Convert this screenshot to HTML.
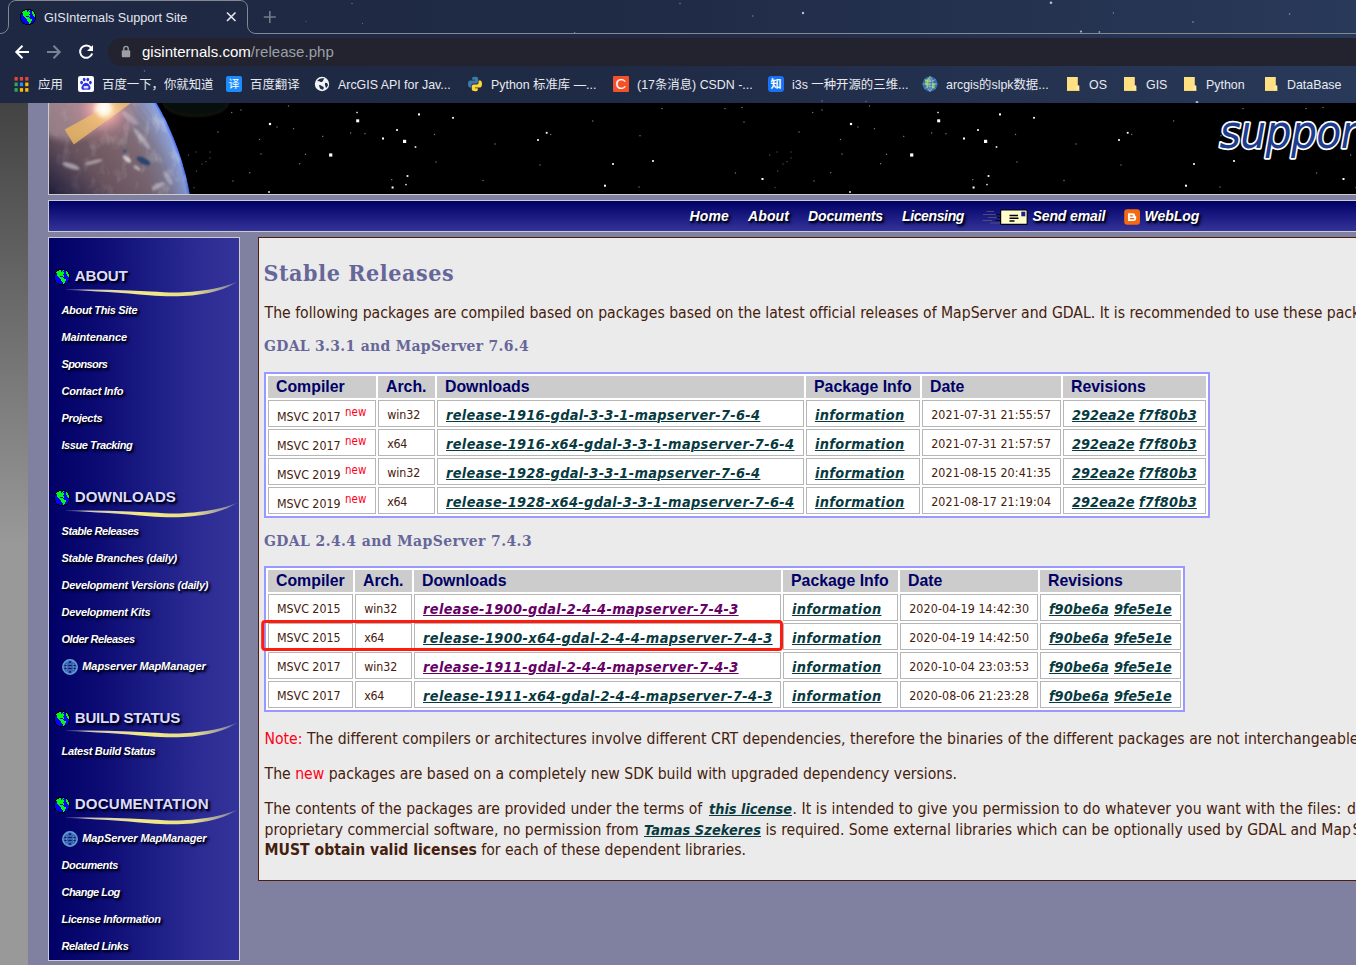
<!DOCTYPE html>
<html lang="en">
<head>
<meta charset="utf-8">
<title>GISInternals Support Site</title>
<style>
*{box-sizing:border-box;margin:0;padding:0}
html,body{width:1356px;height:965px;overflow:hidden}
body{position:relative;background:#8080a0;font-family:"DejaVu Sans Condensed","Liberation Sans",sans-serif;color:#45200c}
.abs{position:absolute}
/* ---------- browser chrome ---------- */
#chrome{position:absolute;left:0;top:0;width:1356px;height:103px;background:linear-gradient(90deg,#1e2842 0,#1f2a45 45%,#293959 100%);overflow:hidden;font-family:"Liberation Sans","Noto Sans CJK SC",sans-serif}
#tabstrip{position:absolute;left:0;top:0;width:1356px;height:35px}
#toolbar{position:absolute;left:0;top:35px;width:1356px;height:33px}
#omni{position:absolute;left:108px;top:38px;width:1300px;height:28px;border-radius:14px;background:#22232f}
#url{position:absolute;left:142px;top:42px;font-size:15px;line-height:20px;color:#fff;white-space:nowrap;letter-spacing:0.03px}
#url span{color:#9aa0a6}
#tabtitle{position:absolute;left:44px;top:9.9px;font-size:12.65px;line-height:16px;color:#e4e7ee;white-space:nowrap}
.bm{position:absolute;top:77.2px;height:17px;font-size:12.4px;line-height:17px;color:#e8eaf0;white-space:nowrap}
.bmi{position:absolute;top:76px;width:16px;height:16px}
/* ---------- page ---------- */
#strip{position:absolute;left:0;top:103px;width:28px;height:862px;background:linear-gradient(180deg,#434343 0,#999999 442px,#999999 100%)}
#banner{position:absolute;left:48px;top:96px;width:1320px;height:99px;border:1px solid #ccc;background:#000;overflow:hidden}
#nav{position:absolute;left:48px;top:200px;width:1320px;height:32px;border:1px solid #ccc;background:linear-gradient(180deg,#000066 0,#333399 100%)}
.nv{position:absolute;top:7px;font-size:14.5px;line-height:18px;font-weight:bold;font-style:italic;color:#fff;white-space:nowrap;text-shadow:2px 2px 2px #000033}
#side{position:absolute;left:48px;top:237px;width:192px;height:724px;border:1px solid #ccc;background:linear-gradient(90deg,#000067 0,#0c0c74 28%,#1f1f88 58%,#2c2c94 80%,#333399 100%)}
.sh{position:absolute;left:26px;font-family:"Liberation Sans",sans-serif;font-size:16px;line-height:20px;font-weight:bold;color:#dcdcff;white-space:nowrap;text-shadow:2px 2px 2px #000033}
.si{position:absolute;left:12px;font-size:11.5px;line-height:16px;font-weight:bold;font-style:italic;color:#fff;white-space:nowrap;text-shadow:2px 2px 2px #000033}
.gl{position:absolute;left:5px;width:16px;height:16px}
.sw{position:absolute;left:14px;width:176px;height:18px}
#content{position:absolute;left:258px;top:237px;width:1110px;height:644px;border:1px solid #4d1f0a;background:#ebebeb}

































/*GENCSS-START*/.tb{position:absolute;border:2px solid #9999ff;background:#fff}.thc{position:absolute;height:22px;background:#ccc}.tdc{position:absolute;height:27px;background:#fff;border:1px solid #b6b6b6}#sideic{position:absolute;left:49px;top:238px;width:190px;height:721px}.h1{position:absolute;white-space:pre;font-family:"DejaVu Serif Condensed","DejaVu Serif","Liberation Serif",serif;font-weight:bold;font-size:23px;line-height:30px;color:#666699}.h2{position:absolute;white-space:pre;font-family:"DejaVu Serif Condensed","DejaVu Serif","Liberation Serif",serif;font-weight:bold;font-size:15.5px;line-height:22px;color:#666699}.p{position:absolute;white-space:pre;font-family:"DejaVu Sans Condensed","Liberation Sans",sans-serif;font-size:15.62px;line-height:20px;color:#45200c}.th{position:absolute;white-space:pre;font-family:"Liberation Sans",sans-serif;font-weight:bold;font-size:15.85px;line-height:20px;color:#000066}.td{position:absolute;white-space:pre;font-family:"DejaVu Sans Condensed","Liberation Sans",sans-serif;font-size:12.35px;line-height:16px;color:#45200c}.lk{position:absolute;white-space:pre;font-family:"DejaVu Sans Condensed","Liberation Sans",sans-serif;font-weight:bold;font-style:italic;font-size:14.4px;line-height:20px;color:#083a40;text-decoration:underline;text-decoration-thickness:1.3px;text-underline-offset:1.1px}.sup{position:absolute;white-space:pre;font-family:"DejaVu Sans Condensed","Liberation Sans",sans-serif;font-size:11.4px;line-height:14px;color:#ff0018}.nv{position:absolute;white-space:pre;font-family:"Liberation Sans",sans-serif;font-weight:bold;font-style:italic;font-size:14px;line-height:18px;color:#fff;text-shadow:1.5px 1.5px 1.5px #00001c,2px 2px 3px #000030}.sh{position:absolute;white-space:pre;font-family:"Liberation Sans",sans-serif;font-weight:bold;font-size:15.1px;line-height:20px;color:#dcdcff;text-shadow:1.5px 1.5px 1.5px #00001c,2px 2px 3px #000030}.si{position:absolute;white-space:pre;font-family:"Liberation Sans",sans-serif;font-weight:bold;font-style:italic;font-size:11px;line-height:16px;color:#fff;text-shadow:1.5px 1.5px 1.5px #00001c,2px 2px 3px #000030}/*GENCSS-END*/
</style>
</head>
<body>
<div id="strip"></div>
<div id="banner"><svg class="abs" style="left:0;top:0" width="1307" height="97" viewBox="49 97 1307 97">
<defs>
<radialGradient id="eg" gradientUnits="userSpaceOnUse" cx="-80" cy="241" r="274">
<stop offset="0" stop-color="#6e5654"/><stop offset="0.75" stop-color="#8c6e6e"/><stop offset="0.86" stop-color="#87727a"/><stop offset="0.925" stop-color="#838098"/><stop offset="0.968" stop-color="#8a96c4"/><stop offset="0.988" stop-color="#8aa2e0"/><stop offset="0.996" stop-color="#5a7cea"/><stop offset="1" stop-color="#2c54e4"/>
</radialGradient>
<linearGradient id="ed" gradientUnits="userSpaceOnUse" x1="49" y1="194" x2="130" y2="110"><stop offset="0" stop-color="#181838" stop-opacity="0.95"/><stop offset="0.4" stop-color="#342c48" stop-opacity="0.4"/><stop offset="1" stop-color="#3a304a" stop-opacity="0"/></linearGradient>
<radialGradient id="fl" gradientUnits="userSpaceOnUse" cx="104" cy="109" r="38"><stop offset="0" stop-color="#fff"/><stop offset="0.14" stop-color="#fff4e8"/><stop offset="0.34" stop-color="#f2aca6" stop-opacity="0.8"/><stop offset="0.65" stop-color="#c88c9c" stop-opacity="0.35"/><stop offset="1" stop-color="#c08898" stop-opacity="0"/></radialGradient>
<radialGradient id="fl2" gradientUnits="userSpaceOnUse" cx="104" cy="109" r="11"><stop offset="0" stop-color="#fff"/><stop offset="0.5" stop-color="#fff6e6" stop-opacity="0.9"/><stop offset="1" stop-color="#ffe0b0" stop-opacity="0"/></radialGradient>
<linearGradient id="stg" gradientUnits="userSpaceOnUse" x1="66" y1="138" x2="122" y2="103"><stop offset="0" stop-color="#e6b25c" stop-opacity="0.85"/><stop offset="0.55" stop-color="#f0c070" stop-opacity="0.8"/><stop offset="0.8" stop-color="#fbd898" stop-opacity="0.75"/><stop offset="1" stop-color="#f0c274" stop-opacity="0.8"/></linearGradient><clipPath id="ec"><circle cx="-80" cy="241" r="274"/></clipPath>
<filter id="tx" x="0" y="0" width="100%" height="100%"><feTurbulence type="fractalNoise" baseFrequency="0.1 0.06" numOctaves="3" seed="11"/><feColorMatrix type="matrix" values="0 0 0 0 1  0 0 0 0 1  0 0 0 0 1  2.4 0 0 0 -1.25"/></filter><filter id="b1" x="-50%" y="-50%" width="200%" height="200%"><feGaussianBlur stdDeviation="1.3"/></filter>
<filter id="b2" x="-50%" y="-50%" width="200%" height="200%"><feGaussianBlur stdDeviation="3"/></filter>
</defs>
<rect x="49" y="97" width="1307" height="97" fill="#000"/>
<rect x="403.0" y="139.8" width="3.2" height="3.2" fill="#fff"/><rect x="356.2" y="119.3" width="3.0" height="3.0" fill="#fff"/><rect x="329.1" y="153.4" width="3.2" height="3.2" fill="#fff"/><rect x="268.9" y="122.9" width="2.2" height="2.2" fill="#fff"/><rect x="418.0" y="113.4" width="2.0" height="2.0" fill="#fff"/><rect x="452.1" y="116.9" width="1.8" height="1.8" fill="#fff"/><rect x="537.1" y="139.1" width="1.8" height="1.8" fill="#fff"/><rect x="545.8" y="131.9" width="1.8" height="1.8" fill="#fff"/><rect x="612.1" y="163.1" width="1.8" height="1.8" fill="#fff"/><rect x="604.0" y="184.7" width="2.0" height="2.0" fill="#fff"/><rect x="652.1" y="160.1" width="1.8" height="1.8" fill="#fff"/><rect x="761.5" y="178.0" width="2.0" height="2.0" fill="#fff"/><rect x="382.0" y="137.5" width="2.0" height="2.0" fill="#fff"/><rect x="396.1" y="129.1" width="1.8" height="1.8" fill="#fff"/><rect x="414.7" y="146.2" width="1.6" height="1.6" fill="#fff"/><rect x="406.6" y="175.1" width="1.8" height="1.8" fill="#fff"/><rect x="391.6" y="186.5" width="2.0" height="2.0" fill="#fff"/><rect x="268.2" y="191.2" width="1.6" height="1.6" fill="#fff"/><rect x="405.3" y="183.9" width="1.4" height="1.4" fill="#fff"/><rect x="356.3" y="111.8" width="1.4" height="1.4" fill="#fff"/><rect x="435.4" y="161.4" width="1.2" height="1.2" fill="#7e7e7e"/><rect x="433.9" y="133.9" width="1.2" height="1.2" fill="#7e7e7e"/><rect x="482.4" y="179.9" width="1.2" height="1.2" fill="#7e7e7e"/><rect x="494.4" y="143.4" width="1.2" height="1.2" fill="#7e7e7e"/><rect x="550.1" y="133.9" width="1.2" height="1.2" fill="#7e7e7e"/><rect x="539.4" y="164.4" width="1.2" height="1.2" fill="#7e7e7e"/><rect x="592.1" y="120.4" width="1.2" height="1.2" fill="#7e7e7e"/><rect x="638.4" y="186.4" width="1.2" height="1.2" fill="#7e7e7e"/><rect x="639.4" y="135.1" width="1.2" height="1.2" fill="#7e7e7e"/><rect x="661.4" y="108.0" width="1.2" height="1.2" fill="#7e7e7e"/><rect x="724.4" y="108.0" width="1.2" height="1.2" fill="#7e7e7e"/><rect x="741.4" y="106.9" width="1.2" height="1.2" fill="#7e7e7e"/><rect x="743.4" y="121.4" width="1.2" height="1.2" fill="#7e7e7e"/><rect x="734.9" y="172.4" width="1.2" height="1.2" fill="#7e7e7e"/><rect x="231.1" y="111.9" width="1.2" height="1.2" fill="#7e7e7e"/><rect x="276.4" y="126.4" width="1.2" height="1.2" fill="#7e7e7e"/><rect x="292.9" y="128.1" width="1.2" height="1.2" fill="#7e7e7e"/><rect x="287.9" y="105.4" width="1.2" height="1.2" fill="#7e7e7e"/><rect x="350.0" y="132.4" width="1.2" height="1.2" fill="#7e7e7e"/><rect x="364.4" y="133.1" width="1.2" height="1.2" fill="#7e7e7e"/><rect x="322.1" y="135.8" width="1.2" height="1.2" fill="#7e7e7e"/><rect x="258.9" y="138.9" width="1.2" height="1.2" fill="#7e7e7e"/><rect x="260.4" y="153.4" width="1.2" height="1.2" fill="#7e7e7e"/><rect x="304.9" y="153.8" width="1.2" height="1.2" fill="#7e7e7e"/><rect x="299.0" y="163.1" width="1.2" height="1.2" fill="#7e7e7e"/><rect x="249.1" y="172.1" width="1.2" height="1.2" fill="#7e7e7e"/><rect x="196.0" y="170.4" width="1.2" height="1.2" fill="#4c4c4c"/><rect x="188.0" y="154.4" width="1.2" height="1.2" fill="#4c4c4c"/><rect x="217.4" y="131.4" width="1.2" height="1.2" fill="#7e7e7e"/><rect x="205.4" y="161.0" width="1.2" height="1.2" fill="#4c4c4c"/><rect x="209.4" y="157.4" width="1.2" height="1.2" fill="#4c4c4c"/><rect x="201.4" y="163.4" width="1.2" height="1.2" fill="#4c4c4c"/><rect x="391.1" y="179.0" width="1.2" height="1.2" fill="#7e7e7e"/><rect x="193.4" y="187.0" width="1.2" height="1.2" fill="#4c4c4c"/><rect x="240.4" y="109.4" width="1.2" height="1.2" fill="#7e7e7e"/><rect x="232.4" y="180.4" width="1.2" height="1.2" fill="#7e7e7e"/><rect x="195.4" y="151.4" width="1.2" height="1.2" fill="#4c4c4c"/><rect x="209.4" y="151.4" width="1.2" height="1.2" fill="#4c4c4c"/><rect x="984.0" y="139.8" width="3.2" height="3.2" fill="#fff"/><rect x="937.2" y="119.3" width="3.0" height="3.0" fill="#fff"/><rect x="910.1" y="153.4" width="3.2" height="3.2" fill="#fff"/><rect x="849.9" y="122.9" width="2.2" height="2.2" fill="#fff"/><rect x="999.0" y="113.4" width="2.0" height="2.0" fill="#fff"/><rect x="1033.1" y="116.9" width="1.8" height="1.8" fill="#fff"/><rect x="1118.1" y="139.1" width="1.8" height="1.8" fill="#fff"/><rect x="1126.8" y="131.9" width="1.8" height="1.8" fill="#fff"/><rect x="1193.1" y="163.1" width="1.8" height="1.8" fill="#fff"/><rect x="1185.0" y="184.7" width="2.0" height="2.0" fill="#fff"/><rect x="1233.1" y="160.1" width="1.8" height="1.8" fill="#fff"/><rect x="1342.5" y="178.0" width="2.0" height="2.0" fill="#fff"/><rect x="963.0" y="137.5" width="2.0" height="2.0" fill="#fff"/><rect x="977.1" y="129.1" width="1.8" height="1.8" fill="#fff"/><rect x="995.7" y="146.2" width="1.6" height="1.6" fill="#fff"/><rect x="987.6" y="175.1" width="1.8" height="1.8" fill="#fff"/><rect x="972.6" y="186.5" width="2.0" height="2.0" fill="#fff"/><rect x="849.2" y="191.2" width="1.6" height="1.6" fill="#fff"/><rect x="986.3" y="183.9" width="1.4" height="1.4" fill="#fff"/><rect x="937.3" y="111.8" width="1.4" height="1.4" fill="#fff"/><rect x="1016.4" y="161.4" width="1.2" height="1.2" fill="#7e7e7e"/><rect x="1014.9" y="133.9" width="1.2" height="1.2" fill="#7e7e7e"/><rect x="1063.4" y="179.9" width="1.2" height="1.2" fill="#7e7e7e"/><rect x="1075.4" y="143.4" width="1.2" height="1.2" fill="#7e7e7e"/><rect x="1131.1" y="133.9" width="1.2" height="1.2" fill="#7e7e7e"/><rect x="1120.4" y="164.4" width="1.2" height="1.2" fill="#7e7e7e"/><rect x="1173.1" y="120.4" width="1.2" height="1.2" fill="#7e7e7e"/><rect x="1219.4" y="186.4" width="1.2" height="1.2" fill="#7e7e7e"/><rect x="1220.4" y="135.1" width="1.2" height="1.2" fill="#7e7e7e"/><rect x="1242.4" y="108.0" width="1.2" height="1.2" fill="#7e7e7e"/><rect x="1305.4" y="108.0" width="1.2" height="1.2" fill="#7e7e7e"/><rect x="1322.4" y="106.9" width="1.2" height="1.2" fill="#7e7e7e"/><rect x="1324.4" y="121.4" width="1.2" height="1.2" fill="#7e7e7e"/><rect x="1315.9" y="172.4" width="1.2" height="1.2" fill="#7e7e7e"/><rect x="812.1" y="111.9" width="1.2" height="1.2" fill="#7e7e7e"/><rect x="857.4" y="126.4" width="1.2" height="1.2" fill="#7e7e7e"/><rect x="873.9" y="128.1" width="1.2" height="1.2" fill="#7e7e7e"/><rect x="868.9" y="105.4" width="1.2" height="1.2" fill="#7e7e7e"/><rect x="931.0" y="132.4" width="1.2" height="1.2" fill="#7e7e7e"/><rect x="945.4" y="133.1" width="1.2" height="1.2" fill="#7e7e7e"/><rect x="903.1" y="135.8" width="1.2" height="1.2" fill="#7e7e7e"/><rect x="839.9" y="138.9" width="1.2" height="1.2" fill="#7e7e7e"/><rect x="841.4" y="153.4" width="1.2" height="1.2" fill="#7e7e7e"/><rect x="885.9" y="153.8" width="1.2" height="1.2" fill="#7e7e7e"/><rect x="880.0" y="163.1" width="1.2" height="1.2" fill="#7e7e7e"/><rect x="830.1" y="172.1" width="1.2" height="1.2" fill="#7e7e7e"/><rect x="777.0" y="170.4" width="1.2" height="1.2" fill="#4c4c4c"/><rect x="769.0" y="154.4" width="1.2" height="1.2" fill="#4c4c4c"/><rect x="798.4" y="131.4" width="1.2" height="1.2" fill="#7e7e7e"/><rect x="786.4" y="161.0" width="1.2" height="1.2" fill="#4c4c4c"/><rect x="790.4" y="157.4" width="1.2" height="1.2" fill="#4c4c4c"/><rect x="782.4" y="163.4" width="1.2" height="1.2" fill="#4c4c4c"/><rect x="972.1" y="179.0" width="1.2" height="1.2" fill="#7e7e7e"/><rect x="774.4" y="187.0" width="1.2" height="1.2" fill="#4c4c4c"/><rect x="821.4" y="109.4" width="1.2" height="1.2" fill="#7e7e7e"/><rect x="813.4" y="180.4" width="1.2" height="1.2" fill="#7e7e7e"/><rect x="776.4" y="151.4" width="1.2" height="1.2" fill="#4c4c4c"/><rect x="790.4" y="151.4" width="1.2" height="1.2" fill="#4c4c4c"/><rect x="1358.0" y="170.4" width="1.2" height="1.2" fill="#7e7e7e"/><rect x="1350.0" y="154.4" width="1.2" height="1.2" fill="#7e7e7e"/><rect x="1355.4" y="187.0" width="1.2" height="1.2" fill="#7e7e7e"/><rect x="1357.4" y="151.4" width="1.2" height="1.2" fill="#7e7e7e"/>
<ellipse cx="196" cy="103" rx="32" ry="13" fill="#0b1a12" stroke="#2c2a1c" stroke-width="1.600" opacity="0.55" filter="url(#b1)"/>
<g clip-path="url(#ec)">
<circle cx="-80" cy="241" r="274" fill="url(#eg)"/>
<rect x="49" y="97" width="150" height="97" filter="url(#tx)" opacity="0.3"/><rect x="49" y="97" width="160" height="97" fill="url(#ed)"/>
<ellipse cx="68" cy="114" rx="34" ry="26" fill="#c4a8b0" opacity="0.5" filter="url(#b2)"/>
<rect x="49" y="97" width="160" height="97" fill="url(#fl)"/>
<polygon points="64.600,129.500 73.800,144.400 131,103 113,103" fill="url(#stg)"/>
<circle cx="104" cy="109" r="11" fill="url(#fl2)"/>
<g filter="url(#b1)" fill="#fff">
<ellipse cx="71" cy="166" rx="9" ry="2.600" opacity="0.45" transform="rotate(18 71 166)"/>
<ellipse cx="94" cy="162" rx="9" ry="1.700" opacity="0.4" transform="rotate(-14 94 162)"/>
<ellipse cx="127" cy="159" rx="5" ry="2.2" opacity="0.6" transform="rotate(40 127 159)"/>
<ellipse cx="137" cy="168" rx="4" ry="1.600" opacity="0.5" transform="rotate(35 137 168)"/>
<ellipse cx="142" cy="139" rx="13" ry="2.600" opacity="0.32" transform="rotate(52 142 139)"/>
<ellipse cx="168" cy="178" rx="8" ry="2.600" opacity="0.3" transform="rotate(60 168 178)"/>
<ellipse cx="130" cy="118" rx="10" ry="3" opacity="0.25" transform="rotate(40 130 118)"/>
<ellipse cx="158" cy="186" rx="7" ry="2.500" opacity="0.35" transform="rotate(-30 158 186)"/>
</g>
<g filter="url(#b1)" stroke="#c8cce8" stroke-width="1" opacity="0.28"><path d="M128 108 L146 132 M134 106 L152 130 M140 105 L158 131 M146 104 L164 132 M122 112 L138 134 M152 108 L168 134"/></g><g filter="url(#b1)"><ellipse cx="143.500" cy="161" rx="7.500" ry="3" fill="#24406e" opacity="0.95" transform="rotate(28 143.500 161)"/><ellipse cx="125" cy="151" rx="2.200" ry="1.500" fill="#2a4878" opacity="0.8"/></g>
</g>
<g font-family="'DejaVu Sans Condensed','DejaVu Sans','Liberation Sans',sans-serif" font-style="italic" font-size="45.500" letter-spacing="-0.600" stroke-linejoin="round"><text x="1219.500" y="148.300" fill="#fff" stroke="#fff" stroke-width="3.300">support</text><text x="1219.500" y="148.300" fill="#1c3c8e">support</text></g>
</svg></div>
<div id="nav"><svg class="abs" style="left:0;top:0" width="1307" height="30" viewBox="49 201 1307 30">
<g stroke="#55557c" stroke-width="1" opacity="0.85"><path d="M986.500 211.500 H994 M983 214.500 H999 M988 217.500 H1000 M982.500 220.500 H992 M990 223 H1000"/></g>
<g stroke="#000" stroke-width="1.2" opacity="0.9"><path d="M996 214.500 H1001 M997 217.500 H1001 M995.500 220.500 H1001"/></g>
<rect x="1000.600" y="210" width="26.600" height="14.400" rx="1" fill="#ffffcc" stroke="#000010" stroke-width="1.200"/>
<rect x="1021.300" y="211.700" width="4" height="4.600" fill="#1c1c8c"/>
<path d="M1009.500 215.500 H1018 M1009.500 218.300 H1018.500 M1009.500 221 H1014.500" stroke="#000" stroke-width="1.500"/>
<rect x="1124.200" y="209.200" width="15.800" height="15.600" rx="3" fill="#f6690e"/>
<path d="M1128.300 213.300 H1132.800 Q1135.200 213.300 1135.200 215.600 V216.300 H1136.200 V218.300 Q1136.200 221 1133.600 221 H1128.300 Q1128 221 1128 220.500 V213.800 Q1128 213.300 1128.300 213.300 Z" fill="#fff"/>
<path d="M1130.300 215.800 H1132.600 M1130.300 218.600 H1133.800" stroke="#f6690e" stroke-width="1.300" stroke-linecap="round"/>
</svg></div>
<svg class="abs" style="left:258px;top:616px;z-index:5" width="530" height="40" viewBox="258 616 530 40"><rect x="262.700" y="621.400" width="518.800" height="28.100" rx="2.600" fill="none" stroke="#fd1c0e" stroke-width="3"/></svg>
<div id="side"></div>
<div id="content"></div>

































<!--GEN-START-->
<div class="tb" style="left:264px;top:372px;width:946px;height:146px"></div>
<div class="thc" style="left:268px;top:376px;width:108px"></div>
<div class="tdc" style="left:268px;top:400px;width:108px"></div>
<div class="tdc" style="left:268px;top:429px;width:108px"></div>
<div class="tdc" style="left:268px;top:458px;width:108px"></div>
<div class="tdc" style="left:268px;top:487px;width:108px"></div>
<div class="thc" style="left:378px;top:376px;width:57px"></div>
<div class="tdc" style="left:378px;top:400px;width:57px"></div>
<div class="tdc" style="left:378px;top:429px;width:57px"></div>
<div class="tdc" style="left:378px;top:458px;width:57px"></div>
<div class="tdc" style="left:378px;top:487px;width:57px"></div>
<div class="thc" style="left:437px;top:376px;width:367px"></div>
<div class="tdc" style="left:437px;top:400px;width:367px"></div>
<div class="tdc" style="left:437px;top:429px;width:367px"></div>
<div class="tdc" style="left:437px;top:458px;width:367px"></div>
<div class="tdc" style="left:437px;top:487px;width:367px"></div>
<div class="thc" style="left:806px;top:376px;width:114px"></div>
<div class="tdc" style="left:806px;top:400px;width:114px"></div>
<div class="tdc" style="left:806px;top:429px;width:114px"></div>
<div class="tdc" style="left:806px;top:458px;width:114px"></div>
<div class="tdc" style="left:806px;top:487px;width:114px"></div>
<div class="thc" style="left:922px;top:376px;width:139px"></div>
<div class="tdc" style="left:922px;top:400px;width:139px"></div>
<div class="tdc" style="left:922px;top:429px;width:139px"></div>
<div class="tdc" style="left:922px;top:458px;width:139px"></div>
<div class="tdc" style="left:922px;top:487px;width:139px"></div>
<div class="thc" style="left:1063px;top:376px;width:143px"></div>
<div class="tdc" style="left:1063px;top:400px;width:143px"></div>
<div class="tdc" style="left:1063px;top:429px;width:143px"></div>
<div class="tdc" style="left:1063px;top:458px;width:143px"></div>
<div class="tdc" style="left:1063px;top:487px;width:143px"></div>
<div class="tb" style="left:264px;top:566px;width:921px;height:146px"></div>
<div class="thc" style="left:268px;top:570px;width:85px"></div>
<div class="tdc" style="left:268px;top:594px;width:85px"></div>
<div class="tdc" style="left:268px;top:623px;width:85px"></div>
<div class="tdc" style="left:268px;top:652px;width:85px"></div>
<div class="tdc" style="left:268px;top:681px;width:85px"></div>
<div class="thc" style="left:355px;top:570px;width:57px"></div>
<div class="tdc" style="left:355px;top:594px;width:57px"></div>
<div class="tdc" style="left:355px;top:623px;width:57px"></div>
<div class="tdc" style="left:355px;top:652px;width:57px"></div>
<div class="tdc" style="left:355px;top:681px;width:57px"></div>
<div class="thc" style="left:414px;top:570px;width:367px"></div>
<div class="tdc" style="left:414px;top:594px;width:367px"></div>
<div class="tdc" style="left:414px;top:623px;width:367px"></div>
<div class="tdc" style="left:414px;top:652px;width:367px"></div>
<div class="tdc" style="left:414px;top:681px;width:367px"></div>
<div class="thc" style="left:783px;top:570px;width:115px"></div>
<div class="tdc" style="left:783px;top:594px;width:115px"></div>
<div class="tdc" style="left:783px;top:623px;width:115px"></div>
<div class="tdc" style="left:783px;top:652px;width:115px"></div>
<div class="tdc" style="left:783px;top:681px;width:115px"></div>
<div class="thc" style="left:900px;top:570px;width:138px"></div>
<div class="tdc" style="left:900px;top:594px;width:138px"></div>
<div class="tdc" style="left:900px;top:623px;width:138px"></div>
<div class="tdc" style="left:900px;top:652px;width:138px"></div>
<div class="tdc" style="left:900px;top:681px;width:138px"></div>
<div class="thc" style="left:1040px;top:570px;width:141px"></div>
<div class="tdc" style="left:1040px;top:594px;width:141px"></div>
<div class="tdc" style="left:1040px;top:623px;width:141px"></div>
<div class="tdc" style="left:1040px;top:652px;width:141px"></div>
<div class="tdc" style="left:1040px;top:681px;width:141px"></div>
<div id="sideic"><svg class="gl" style="top:31.0px" viewBox="0 0 16 16" shape-rendering="crispEdges"><rect x="5" y="0" width="6" height="1" fill="#000"/><rect x="3" y="1" width="2" height="1" fill="#000"/><rect x="5" y="1" width="2" height="1" fill="#06f80a"/><rect x="7" y="1" width="2" height="1" fill="#0202fa"/><rect x="9" y="1" width="1" height="1" fill="#06f80a"/><rect x="10" y="1" width="1" height="1" fill="#0202fa"/><rect x="11" y="1" width="2" height="1" fill="#000"/><rect x="2" y="2" width="1" height="1" fill="#000"/><rect x="3" y="2" width="4" height="1" fill="#06f80a"/><rect x="7" y="2" width="1" height="1" fill="#0202fa"/><rect x="8" y="2" width="1" height="1" fill="#06f80a"/><rect x="9" y="2" width="3" height="1" fill="#0202fa"/><rect x="12" y="2" width="1" height="1" fill="#06f80a"/><rect x="13" y="2" width="1" height="1" fill="#000"/><rect x="1" y="3" width="1" height="1" fill="#000"/><rect x="2" y="3" width="8" height="1" fill="#06f80a"/><rect x="10" y="3" width="2" height="1" fill="#0202fa"/><rect x="12" y="3" width="2" height="1" fill="#06f80a"/><rect x="14" y="3" width="1" height="1" fill="#000"/><rect x="1" y="4" width="1" height="1" fill="#000"/><rect x="2" y="4" width="1" height="1" fill="#0202fa"/><rect x="3" y="4" width="7" height="1" fill="#06f80a"/><rect x="10" y="4" width="2" height="1" fill="#0202fa"/><rect x="12" y="4" width="2" height="1" fill="#06f80a"/><rect x="14" y="4" width="1" height="1" fill="#000"/><rect x="0" y="5" width="1" height="1" fill="#000"/><rect x="1" y="5" width="2" height="1" fill="#0202fa"/><rect x="3" y="5" width="6" height="1" fill="#06f80a"/><rect x="9" y="5" width="4" height="1" fill="#0202fa"/><rect x="13" y="5" width="2" height="1" fill="#06f80a"/><rect x="15" y="5" width="1" height="1" fill="#000"/><rect x="0" y="6" width="1" height="1" fill="#000"/><rect x="1" y="6" width="2" height="1" fill="#0202fa"/><rect x="3" y="6" width="7" height="1" fill="#06f80a"/><rect x="10" y="6" width="3" height="1" fill="#0202fa"/><rect x="13" y="6" width="2" height="1" fill="#06f80a"/><rect x="15" y="6" width="1" height="1" fill="#000"/><rect x="0" y="7" width="1" height="1" fill="#000"/><rect x="1" y="7" width="3" height="1" fill="#0202fa"/><rect x="4" y="7" width="2" height="1" fill="#06f80a"/><rect x="6" y="7" width="3" height="1" fill="#0202fa"/><rect x="9" y="7" width="1" height="1" fill="#06f80a"/><rect x="10" y="7" width="4" height="1" fill="#0202fa"/><rect x="14" y="7" width="1" height="1" fill="#06f80a"/><rect x="15" y="7" width="1" height="1" fill="#000"/><rect x="0" y="8" width="1" height="1" fill="#000"/><rect x="1" y="8" width="4" height="1" fill="#0202fa"/><rect x="5" y="8" width="4" height="1" fill="#06f80a"/><rect x="9" y="8" width="6" height="1" fill="#0202fa"/><rect x="15" y="8" width="1" height="1" fill="#000"/><rect x="0" y="9" width="1" height="1" fill="#000"/><rect x="1" y="9" width="5" height="1" fill="#0202fa"/><rect x="6" y="9" width="4" height="1" fill="#06f80a"/><rect x="10" y="9" width="5" height="1" fill="#0202fa"/><rect x="15" y="9" width="1" height="1" fill="#000"/><rect x="0" y="10" width="1" height="1" fill="#000"/><rect x="1" y="10" width="6" height="1" fill="#0202fa"/><rect x="7" y="10" width="5" height="1" fill="#06f80a"/><rect x="12" y="10" width="3" height="1" fill="#0202fa"/><rect x="15" y="10" width="1" height="1" fill="#000"/><rect x="1" y="11" width="1" height="1" fill="#000"/><rect x="2" y="11" width="5" height="1" fill="#0202fa"/><rect x="7" y="11" width="5" height="1" fill="#06f80a"/><rect x="12" y="11" width="2" height="1" fill="#0202fa"/><rect x="14" y="11" width="1" height="1" fill="#000"/><rect x="1" y="12" width="1" height="1" fill="#000"/><rect x="2" y="12" width="6" height="1" fill="#0202fa"/><rect x="8" y="12" width="3" height="1" fill="#06f80a"/><rect x="11" y="12" width="3" height="1" fill="#0202fa"/><rect x="14" y="12" width="1" height="1" fill="#000"/><rect x="2" y="13" width="1" height="1" fill="#000"/><rect x="3" y="13" width="6" height="1" fill="#0202fa"/><rect x="9" y="13" width="2" height="1" fill="#06f80a"/><rect x="11" y="13" width="2" height="1" fill="#0202fa"/><rect x="13" y="13" width="1" height="1" fill="#000"/><rect x="3" y="14" width="2" height="1" fill="#000"/><rect x="5" y="14" width="4" height="1" fill="#0202fa"/><rect x="9" y="14" width="1" height="1" fill="#06f80a"/><rect x="10" y="14" width="1" height="1" fill="#0202fa"/><rect x="11" y="14" width="2" height="1" fill="#000"/><rect x="5" y="15" width="6" height="1" fill="#000"/></svg><svg class="sw" style="top:42.8px" viewBox="0 0 176 18"><defs><linearGradient id="sg0" x1="0" x2="1" y1="0" y2="0"><stop offset="0" stop-color="#fff" stop-opacity="0.1"/><stop offset="0.12" stop-color="#fff8c8" stop-opacity="0.8"/><stop offset="0.45" stop-color="#f4ea84"/><stop offset="0.75" stop-color="#efe68c" stop-opacity="0.95"/><stop offset="0.92" stop-color="#e0dca8" stop-opacity="0.6"/><stop offset="1" stop-color="#d8d8c0" stop-opacity="0.25"/></linearGradient></defs><path d="M2.700 8.200 C30 8.200 60 8.900 88 10.400 C100 11.100 110 11.700 120 11.200 C145 9.800 162 6 174.800 0.400 C163 8.200 146 13.700 120 15 C108 15.600 98 15.200 86 14.200 C60 11.900 30 9.600 2.700 8.900 Z" fill="url(#sg0)"/></svg><svg class="gl" style="top:252.0px" viewBox="0 0 16 16" shape-rendering="crispEdges"><rect x="5" y="0" width="6" height="1" fill="#000"/><rect x="3" y="1" width="2" height="1" fill="#000"/><rect x="5" y="1" width="2" height="1" fill="#06f80a"/><rect x="7" y="1" width="2" height="1" fill="#0202fa"/><rect x="9" y="1" width="1" height="1" fill="#06f80a"/><rect x="10" y="1" width="1" height="1" fill="#0202fa"/><rect x="11" y="1" width="2" height="1" fill="#000"/><rect x="2" y="2" width="1" height="1" fill="#000"/><rect x="3" y="2" width="4" height="1" fill="#06f80a"/><rect x="7" y="2" width="1" height="1" fill="#0202fa"/><rect x="8" y="2" width="1" height="1" fill="#06f80a"/><rect x="9" y="2" width="3" height="1" fill="#0202fa"/><rect x="12" y="2" width="1" height="1" fill="#06f80a"/><rect x="13" y="2" width="1" height="1" fill="#000"/><rect x="1" y="3" width="1" height="1" fill="#000"/><rect x="2" y="3" width="8" height="1" fill="#06f80a"/><rect x="10" y="3" width="2" height="1" fill="#0202fa"/><rect x="12" y="3" width="2" height="1" fill="#06f80a"/><rect x="14" y="3" width="1" height="1" fill="#000"/><rect x="1" y="4" width="1" height="1" fill="#000"/><rect x="2" y="4" width="1" height="1" fill="#0202fa"/><rect x="3" y="4" width="7" height="1" fill="#06f80a"/><rect x="10" y="4" width="2" height="1" fill="#0202fa"/><rect x="12" y="4" width="2" height="1" fill="#06f80a"/><rect x="14" y="4" width="1" height="1" fill="#000"/><rect x="0" y="5" width="1" height="1" fill="#000"/><rect x="1" y="5" width="2" height="1" fill="#0202fa"/><rect x="3" y="5" width="6" height="1" fill="#06f80a"/><rect x="9" y="5" width="4" height="1" fill="#0202fa"/><rect x="13" y="5" width="2" height="1" fill="#06f80a"/><rect x="15" y="5" width="1" height="1" fill="#000"/><rect x="0" y="6" width="1" height="1" fill="#000"/><rect x="1" y="6" width="2" height="1" fill="#0202fa"/><rect x="3" y="6" width="7" height="1" fill="#06f80a"/><rect x="10" y="6" width="3" height="1" fill="#0202fa"/><rect x="13" y="6" width="2" height="1" fill="#06f80a"/><rect x="15" y="6" width="1" height="1" fill="#000"/><rect x="0" y="7" width="1" height="1" fill="#000"/><rect x="1" y="7" width="3" height="1" fill="#0202fa"/><rect x="4" y="7" width="2" height="1" fill="#06f80a"/><rect x="6" y="7" width="3" height="1" fill="#0202fa"/><rect x="9" y="7" width="1" height="1" fill="#06f80a"/><rect x="10" y="7" width="4" height="1" fill="#0202fa"/><rect x="14" y="7" width="1" height="1" fill="#06f80a"/><rect x="15" y="7" width="1" height="1" fill="#000"/><rect x="0" y="8" width="1" height="1" fill="#000"/><rect x="1" y="8" width="4" height="1" fill="#0202fa"/><rect x="5" y="8" width="4" height="1" fill="#06f80a"/><rect x="9" y="8" width="6" height="1" fill="#0202fa"/><rect x="15" y="8" width="1" height="1" fill="#000"/><rect x="0" y="9" width="1" height="1" fill="#000"/><rect x="1" y="9" width="5" height="1" fill="#0202fa"/><rect x="6" y="9" width="4" height="1" fill="#06f80a"/><rect x="10" y="9" width="5" height="1" fill="#0202fa"/><rect x="15" y="9" width="1" height="1" fill="#000"/><rect x="0" y="10" width="1" height="1" fill="#000"/><rect x="1" y="10" width="6" height="1" fill="#0202fa"/><rect x="7" y="10" width="5" height="1" fill="#06f80a"/><rect x="12" y="10" width="3" height="1" fill="#0202fa"/><rect x="15" y="10" width="1" height="1" fill="#000"/><rect x="1" y="11" width="1" height="1" fill="#000"/><rect x="2" y="11" width="5" height="1" fill="#0202fa"/><rect x="7" y="11" width="5" height="1" fill="#06f80a"/><rect x="12" y="11" width="2" height="1" fill="#0202fa"/><rect x="14" y="11" width="1" height="1" fill="#000"/><rect x="1" y="12" width="1" height="1" fill="#000"/><rect x="2" y="12" width="6" height="1" fill="#0202fa"/><rect x="8" y="12" width="3" height="1" fill="#06f80a"/><rect x="11" y="12" width="3" height="1" fill="#0202fa"/><rect x="14" y="12" width="1" height="1" fill="#000"/><rect x="2" y="13" width="1" height="1" fill="#000"/><rect x="3" y="13" width="6" height="1" fill="#0202fa"/><rect x="9" y="13" width="2" height="1" fill="#06f80a"/><rect x="11" y="13" width="2" height="1" fill="#0202fa"/><rect x="13" y="13" width="1" height="1" fill="#000"/><rect x="3" y="14" width="2" height="1" fill="#000"/><rect x="5" y="14" width="4" height="1" fill="#0202fa"/><rect x="9" y="14" width="1" height="1" fill="#06f80a"/><rect x="10" y="14" width="1" height="1" fill="#0202fa"/><rect x="11" y="14" width="2" height="1" fill="#000"/><rect x="5" y="15" width="6" height="1" fill="#000"/></svg><svg class="sw" style="top:263.8px" viewBox="0 0 176 18"><defs><linearGradient id="sg1" x1="0" x2="1" y1="0" y2="0"><stop offset="0" stop-color="#fff" stop-opacity="0.1"/><stop offset="0.12" stop-color="#fff8c8" stop-opacity="0.8"/><stop offset="0.45" stop-color="#f4ea84"/><stop offset="0.75" stop-color="#efe68c" stop-opacity="0.95"/><stop offset="0.92" stop-color="#e0dca8" stop-opacity="0.6"/><stop offset="1" stop-color="#d8d8c0" stop-opacity="0.25"/></linearGradient></defs><path d="M2.700 8.200 C30 8.200 60 8.900 88 10.400 C100 11.100 110 11.700 120 11.200 C145 9.800 162 6 174.800 0.400 C163 8.200 146 13.700 120 15 C108 15.600 98 15.200 86 14.200 C60 11.900 30 9.600 2.700 8.900 Z" fill="url(#sg1)"/></svg><svg class="gl" style="top:472.6px" viewBox="0 0 16 16" shape-rendering="crispEdges"><rect x="5" y="0" width="6" height="1" fill="#000"/><rect x="3" y="1" width="2" height="1" fill="#000"/><rect x="5" y="1" width="2" height="1" fill="#06f80a"/><rect x="7" y="1" width="2" height="1" fill="#0202fa"/><rect x="9" y="1" width="1" height="1" fill="#06f80a"/><rect x="10" y="1" width="1" height="1" fill="#0202fa"/><rect x="11" y="1" width="2" height="1" fill="#000"/><rect x="2" y="2" width="1" height="1" fill="#000"/><rect x="3" y="2" width="4" height="1" fill="#06f80a"/><rect x="7" y="2" width="1" height="1" fill="#0202fa"/><rect x="8" y="2" width="1" height="1" fill="#06f80a"/><rect x="9" y="2" width="3" height="1" fill="#0202fa"/><rect x="12" y="2" width="1" height="1" fill="#06f80a"/><rect x="13" y="2" width="1" height="1" fill="#000"/><rect x="1" y="3" width="1" height="1" fill="#000"/><rect x="2" y="3" width="8" height="1" fill="#06f80a"/><rect x="10" y="3" width="2" height="1" fill="#0202fa"/><rect x="12" y="3" width="2" height="1" fill="#06f80a"/><rect x="14" y="3" width="1" height="1" fill="#000"/><rect x="1" y="4" width="1" height="1" fill="#000"/><rect x="2" y="4" width="1" height="1" fill="#0202fa"/><rect x="3" y="4" width="7" height="1" fill="#06f80a"/><rect x="10" y="4" width="2" height="1" fill="#0202fa"/><rect x="12" y="4" width="2" height="1" fill="#06f80a"/><rect x="14" y="4" width="1" height="1" fill="#000"/><rect x="0" y="5" width="1" height="1" fill="#000"/><rect x="1" y="5" width="2" height="1" fill="#0202fa"/><rect x="3" y="5" width="6" height="1" fill="#06f80a"/><rect x="9" y="5" width="4" height="1" fill="#0202fa"/><rect x="13" y="5" width="2" height="1" fill="#06f80a"/><rect x="15" y="5" width="1" height="1" fill="#000"/><rect x="0" y="6" width="1" height="1" fill="#000"/><rect x="1" y="6" width="2" height="1" fill="#0202fa"/><rect x="3" y="6" width="7" height="1" fill="#06f80a"/><rect x="10" y="6" width="3" height="1" fill="#0202fa"/><rect x="13" y="6" width="2" height="1" fill="#06f80a"/><rect x="15" y="6" width="1" height="1" fill="#000"/><rect x="0" y="7" width="1" height="1" fill="#000"/><rect x="1" y="7" width="3" height="1" fill="#0202fa"/><rect x="4" y="7" width="2" height="1" fill="#06f80a"/><rect x="6" y="7" width="3" height="1" fill="#0202fa"/><rect x="9" y="7" width="1" height="1" fill="#06f80a"/><rect x="10" y="7" width="4" height="1" fill="#0202fa"/><rect x="14" y="7" width="1" height="1" fill="#06f80a"/><rect x="15" y="7" width="1" height="1" fill="#000"/><rect x="0" y="8" width="1" height="1" fill="#000"/><rect x="1" y="8" width="4" height="1" fill="#0202fa"/><rect x="5" y="8" width="4" height="1" fill="#06f80a"/><rect x="9" y="8" width="6" height="1" fill="#0202fa"/><rect x="15" y="8" width="1" height="1" fill="#000"/><rect x="0" y="9" width="1" height="1" fill="#000"/><rect x="1" y="9" width="5" height="1" fill="#0202fa"/><rect x="6" y="9" width="4" height="1" fill="#06f80a"/><rect x="10" y="9" width="5" height="1" fill="#0202fa"/><rect x="15" y="9" width="1" height="1" fill="#000"/><rect x="0" y="10" width="1" height="1" fill="#000"/><rect x="1" y="10" width="6" height="1" fill="#0202fa"/><rect x="7" y="10" width="5" height="1" fill="#06f80a"/><rect x="12" y="10" width="3" height="1" fill="#0202fa"/><rect x="15" y="10" width="1" height="1" fill="#000"/><rect x="1" y="11" width="1" height="1" fill="#000"/><rect x="2" y="11" width="5" height="1" fill="#0202fa"/><rect x="7" y="11" width="5" height="1" fill="#06f80a"/><rect x="12" y="11" width="2" height="1" fill="#0202fa"/><rect x="14" y="11" width="1" height="1" fill="#000"/><rect x="1" y="12" width="1" height="1" fill="#000"/><rect x="2" y="12" width="6" height="1" fill="#0202fa"/><rect x="8" y="12" width="3" height="1" fill="#06f80a"/><rect x="11" y="12" width="3" height="1" fill="#0202fa"/><rect x="14" y="12" width="1" height="1" fill="#000"/><rect x="2" y="13" width="1" height="1" fill="#000"/><rect x="3" y="13" width="6" height="1" fill="#0202fa"/><rect x="9" y="13" width="2" height="1" fill="#06f80a"/><rect x="11" y="13" width="2" height="1" fill="#0202fa"/><rect x="13" y="13" width="1" height="1" fill="#000"/><rect x="3" y="14" width="2" height="1" fill="#000"/><rect x="5" y="14" width="4" height="1" fill="#0202fa"/><rect x="9" y="14" width="1" height="1" fill="#06f80a"/><rect x="10" y="14" width="1" height="1" fill="#0202fa"/><rect x="11" y="14" width="2" height="1" fill="#000"/><rect x="5" y="15" width="6" height="1" fill="#000"/></svg><svg class="sw" style="top:484.4px" viewBox="0 0 176 18"><defs><linearGradient id="sg2" x1="0" x2="1" y1="0" y2="0"><stop offset="0" stop-color="#fff" stop-opacity="0.1"/><stop offset="0.12" stop-color="#fff8c8" stop-opacity="0.8"/><stop offset="0.45" stop-color="#f4ea84"/><stop offset="0.75" stop-color="#efe68c" stop-opacity="0.95"/><stop offset="0.92" stop-color="#e0dca8" stop-opacity="0.6"/><stop offset="1" stop-color="#d8d8c0" stop-opacity="0.25"/></linearGradient></defs><path d="M2.700 8.200 C30 8.200 60 8.900 88 10.400 C100 11.100 110 11.700 120 11.200 C145 9.800 162 6 174.800 0.400 C163 8.200 146 13.700 120 15 C108 15.600 98 15.200 86 14.200 C60 11.900 30 9.600 2.700 8.900 Z" fill="url(#sg2)"/></svg><svg class="gl" style="top:558.8px" viewBox="0 0 16 16" shape-rendering="crispEdges"><rect x="5" y="0" width="6" height="1" fill="#000"/><rect x="3" y="1" width="2" height="1" fill="#000"/><rect x="5" y="1" width="2" height="1" fill="#06f80a"/><rect x="7" y="1" width="2" height="1" fill="#0202fa"/><rect x="9" y="1" width="1" height="1" fill="#06f80a"/><rect x="10" y="1" width="1" height="1" fill="#0202fa"/><rect x="11" y="1" width="2" height="1" fill="#000"/><rect x="2" y="2" width="1" height="1" fill="#000"/><rect x="3" y="2" width="4" height="1" fill="#06f80a"/><rect x="7" y="2" width="1" height="1" fill="#0202fa"/><rect x="8" y="2" width="1" height="1" fill="#06f80a"/><rect x="9" y="2" width="3" height="1" fill="#0202fa"/><rect x="12" y="2" width="1" height="1" fill="#06f80a"/><rect x="13" y="2" width="1" height="1" fill="#000"/><rect x="1" y="3" width="1" height="1" fill="#000"/><rect x="2" y="3" width="8" height="1" fill="#06f80a"/><rect x="10" y="3" width="2" height="1" fill="#0202fa"/><rect x="12" y="3" width="2" height="1" fill="#06f80a"/><rect x="14" y="3" width="1" height="1" fill="#000"/><rect x="1" y="4" width="1" height="1" fill="#000"/><rect x="2" y="4" width="1" height="1" fill="#0202fa"/><rect x="3" y="4" width="7" height="1" fill="#06f80a"/><rect x="10" y="4" width="2" height="1" fill="#0202fa"/><rect x="12" y="4" width="2" height="1" fill="#06f80a"/><rect x="14" y="4" width="1" height="1" fill="#000"/><rect x="0" y="5" width="1" height="1" fill="#000"/><rect x="1" y="5" width="2" height="1" fill="#0202fa"/><rect x="3" y="5" width="6" height="1" fill="#06f80a"/><rect x="9" y="5" width="4" height="1" fill="#0202fa"/><rect x="13" y="5" width="2" height="1" fill="#06f80a"/><rect x="15" y="5" width="1" height="1" fill="#000"/><rect x="0" y="6" width="1" height="1" fill="#000"/><rect x="1" y="6" width="2" height="1" fill="#0202fa"/><rect x="3" y="6" width="7" height="1" fill="#06f80a"/><rect x="10" y="6" width="3" height="1" fill="#0202fa"/><rect x="13" y="6" width="2" height="1" fill="#06f80a"/><rect x="15" y="6" width="1" height="1" fill="#000"/><rect x="0" y="7" width="1" height="1" fill="#000"/><rect x="1" y="7" width="3" height="1" fill="#0202fa"/><rect x="4" y="7" width="2" height="1" fill="#06f80a"/><rect x="6" y="7" width="3" height="1" fill="#0202fa"/><rect x="9" y="7" width="1" height="1" fill="#06f80a"/><rect x="10" y="7" width="4" height="1" fill="#0202fa"/><rect x="14" y="7" width="1" height="1" fill="#06f80a"/><rect x="15" y="7" width="1" height="1" fill="#000"/><rect x="0" y="8" width="1" height="1" fill="#000"/><rect x="1" y="8" width="4" height="1" fill="#0202fa"/><rect x="5" y="8" width="4" height="1" fill="#06f80a"/><rect x="9" y="8" width="6" height="1" fill="#0202fa"/><rect x="15" y="8" width="1" height="1" fill="#000"/><rect x="0" y="9" width="1" height="1" fill="#000"/><rect x="1" y="9" width="5" height="1" fill="#0202fa"/><rect x="6" y="9" width="4" height="1" fill="#06f80a"/><rect x="10" y="9" width="5" height="1" fill="#0202fa"/><rect x="15" y="9" width="1" height="1" fill="#000"/><rect x="0" y="10" width="1" height="1" fill="#000"/><rect x="1" y="10" width="6" height="1" fill="#0202fa"/><rect x="7" y="10" width="5" height="1" fill="#06f80a"/><rect x="12" y="10" width="3" height="1" fill="#0202fa"/><rect x="15" y="10" width="1" height="1" fill="#000"/><rect x="1" y="11" width="1" height="1" fill="#000"/><rect x="2" y="11" width="5" height="1" fill="#0202fa"/><rect x="7" y="11" width="5" height="1" fill="#06f80a"/><rect x="12" y="11" width="2" height="1" fill="#0202fa"/><rect x="14" y="11" width="1" height="1" fill="#000"/><rect x="1" y="12" width="1" height="1" fill="#000"/><rect x="2" y="12" width="6" height="1" fill="#0202fa"/><rect x="8" y="12" width="3" height="1" fill="#06f80a"/><rect x="11" y="12" width="3" height="1" fill="#0202fa"/><rect x="14" y="12" width="1" height="1" fill="#000"/><rect x="2" y="13" width="1" height="1" fill="#000"/><rect x="3" y="13" width="6" height="1" fill="#0202fa"/><rect x="9" y="13" width="2" height="1" fill="#06f80a"/><rect x="11" y="13" width="2" height="1" fill="#0202fa"/><rect x="13" y="13" width="1" height="1" fill="#000"/><rect x="3" y="14" width="2" height="1" fill="#000"/><rect x="5" y="14" width="4" height="1" fill="#0202fa"/><rect x="9" y="14" width="1" height="1" fill="#06f80a"/><rect x="10" y="14" width="1" height="1" fill="#0202fa"/><rect x="11" y="14" width="2" height="1" fill="#000"/><rect x="5" y="15" width="6" height="1" fill="#000"/></svg><svg class="sw" style="top:570.6px" viewBox="0 0 176 18"><defs><linearGradient id="sg3" x1="0" x2="1" y1="0" y2="0"><stop offset="0" stop-color="#fff" stop-opacity="0.1"/><stop offset="0.12" stop-color="#fff8c8" stop-opacity="0.8"/><stop offset="0.45" stop-color="#f4ea84"/><stop offset="0.75" stop-color="#efe68c" stop-opacity="0.95"/><stop offset="0.92" stop-color="#e0dca8" stop-opacity="0.6"/><stop offset="1" stop-color="#d8d8c0" stop-opacity="0.25"/></linearGradient></defs><path d="M2.700 8.200 C30 8.200 60 8.900 88 10.400 C100 11.100 110 11.700 120 11.200 C145 9.800 162 6 174.800 0.400 C163 8.200 146 13.700 120 15 C108 15.600 98 15.200 86 14.200 C60 11.900 30 9.600 2.700 8.900 Z" fill="url(#sg3)"/></svg><svg class="gl" style="left:13px;top:421.0px;width:16px;height:16px" viewBox="0 0 16 16"><circle cx="8" cy="8" r="7.200" fill="#3b62ac" stroke="#62a2d8" stroke-width="1.500"/><path d="M5.300 2 C4.300 5 4.300 11 5.300 14 M10.700 2 C11.700 5 11.700 11 10.700 14" stroke="#5c98d0" stroke-width="1.100" fill="none"/><g fill="#0a0a6c"><rect x="7.100" y="2.300" width="1.800" height="1.500"/><rect x="7.100" y="12.200" width="1.800" height="1.500"/><rect x="2.400" y="6.100" width="2.300" height="0.900"/><rect x="6.300" y="6.100" width="3.400" height="0.900"/><rect x="11.300" y="6.100" width="2.300" height="0.900"/><rect x="2.400" y="9" width="2.300" height="0.900"/><rect x="6.300" y="9" width="3.400" height="0.900"/><rect x="11.300" y="9" width="2.300" height="0.900"/><rect x="4.400" y="3.800" width="1" height="0.800" opacity="0.7"/><rect x="10.600" y="3.800" width="1" height="0.800" opacity="0.7"/><rect x="4.400" y="11.400" width="1" height="0.800" opacity="0.7"/><rect x="10.600" y="11.400" width="1" height="0.800" opacity="0.7"/></g></svg><svg class="gl" style="left:13px;top:592.9px;width:16px;height:16px" viewBox="0 0 16 16"><circle cx="8" cy="8" r="7.200" fill="#3b62ac" stroke="#62a2d8" stroke-width="1.500"/><path d="M5.300 2 C4.300 5 4.300 11 5.300 14 M10.700 2 C11.700 5 11.700 11 10.700 14" stroke="#5c98d0" stroke-width="1.100" fill="none"/><g fill="#0a0a6c"><rect x="7.100" y="2.300" width="1.800" height="1.500"/><rect x="7.100" y="12.200" width="1.800" height="1.500"/><rect x="2.400" y="6.100" width="2.300" height="0.900"/><rect x="6.300" y="6.100" width="3.400" height="0.900"/><rect x="11.300" y="6.100" width="2.300" height="0.900"/><rect x="2.400" y="9" width="2.300" height="0.900"/><rect x="6.300" y="9" width="3.400" height="0.900"/><rect x="11.300" y="9" width="2.300" height="0.900"/><rect x="4.400" y="3.800" width="1" height="0.800" opacity="0.7"/><rect x="10.600" y="3.800" width="1" height="0.800" opacity="0.7"/><rect x="4.400" y="11.400" width="1" height="0.800" opacity="0.7"/><rect x="10.600" y="11.400" width="1" height="0.800" opacity="0.7"/></g></svg></div>
<div class="nv" style="left:689.6px;top:206.90px;letter-spacing:0.073px">Home</div>
<div class="nv" style="left:748.0px;top:206.90px;letter-spacing:0.113px">About</div>
<div class="nv" style="left:808.0px;top:206.90px;letter-spacing:-0.137px">Documents</div>
<div class="nv" style="left:902.0px;top:206.90px;letter-spacing:-0.373px">Licensing</div>
<div class="nv" style="left:1032.5px;top:206.90px;letter-spacing:-0.112px">Send email</div>
<div class="nv" style="left:1144.5px;top:206.90px;letter-spacing:-0.028px">WebLog</div>
<div class="sh" style="left:74.8px;top:266.30px;letter-spacing:-0.174px">ABOUT</div>
<div class="si" style="left:61.5px;top:301.75px;letter-spacing:-0.331px">About This Site</div>
<div class="si" style="left:61.5px;top:328.75px;letter-spacing:-0.113px">Maintenance</div>
<div class="si" style="left:61.5px;top:355.75px;letter-spacing:-0.617px">Sponsors</div>
<div class="si" style="left:61.5px;top:382.75px;letter-spacing:-0.189px">Contact Info</div>
<div class="si" style="left:61.5px;top:409.75px;letter-spacing:-0.328px">Projects</div>
<div class="si" style="left:61.5px;top:436.75px;letter-spacing:-0.439px">Issue Tracking</div>
<div class="sh" style="left:74.8px;top:487.30px;letter-spacing:0.064px">DOWNLOADS</div>
<div class="si" style="left:61.5px;top:522.75px;letter-spacing:-0.432px">Stable Releases</div>
<div class="si" style="left:61.5px;top:549.75px;letter-spacing:-0.272px">Stable Branches (daily)</div>
<div class="si" style="left:61.5px;top:576.75px;letter-spacing:-0.248px">Development Versions (daily)</div>
<div class="si" style="left:61.5px;top:603.75px;letter-spacing:-0.258px">Development Kits</div>
<div class="si" style="left:61.5px;top:630.75px;letter-spacing:-0.457px">Older Releases</div>
<div class="si" style="left:82.3px;top:657.75px;letter-spacing:-0.101px">Mapserver MapManager</div>
<div class="sh" style="left:74.8px;top:707.90px;letter-spacing:-0.271px">BUILD STATUS</div>
<div class="si" style="left:61.5px;top:743.35px;letter-spacing:-0.301px">Latest Build Status</div>
<div class="sh" style="left:74.8px;top:794.10px;letter-spacing:0.160px">DOCUMENTATION</div>
<div class="si" style="left:82.3px;top:829.55px;letter-spacing:-0.122px">MapServer MapManager</div>
<div class="si" style="left:61.5px;top:856.55px;letter-spacing:-0.390px">Documents</div>
<div class="si" style="left:61.5px;top:883.55px;letter-spacing:-0.526px">Change Log</div>
<div class="si" style="left:61.5px;top:910.55px;letter-spacing:-0.281px">License Information</div>
<div class="si" style="left:61.5px;top:937.55px;letter-spacing:-0.356px">Related Links</div>
<div class="h1" style="left:263.4px;top:258.00px;letter-spacing:0.604px">Stable Releases</div>
<div class="p" style="left:264.6px;top:302.80px;letter-spacing:-0.007px"><span class="pf">The following packages are compiled based on packages based on the latest official releases of MapServer and GDAL. It is recommended to use these pac</span>kages</div>
<div class="h2" style="left:264.0px;top:335.40px;letter-spacing:0.319px">GDAL 3.3.1 and MapServer 7.6.4</div>
<div class="h2" style="left:264.0px;top:529.50px;letter-spacing:0.419px">GDAL 2.4.4 and MapServer 7.4.3</div>
<div class="th" style="left:276.0px;top:376.80px">Compiler</div>
<div class="th" style="left:386.0px;top:376.80px">Arch.</div>
<div class="th" style="left:445.0px;top:376.80px">Downloads</div>
<div class="th" style="left:814.0px;top:376.80px">Package Info</div>
<div class="th" style="left:930.0px;top:376.80px">Date</div>
<div class="th" style="left:1071.0px;top:376.80px">Revisions</div>
<div class="td" style="left:277.0px;top:408.80px;letter-spacing:-0.031px">MSVC 2017</div>
<div class="sup" style="left:345.0px;top:404.70px;letter-spacing:0.104px">new</div>
<div class="td" style="left:387.3px;top:406.70px;letter-spacing:-0.069px">win32</div>
<div class="lk" style="left:446.0px;top:404.50px;letter-spacing:0.324px">release-1916-gdal-3-3-1-mapserver-7-6-4</div>
<div class="lk" style="left:814.9px;top:404.50px;letter-spacing:0.370px">information</div>
<div class="td" style="left:931.2px;top:406.70px;letter-spacing:0.109px">2021-07-31 21:55:57</div>
<div class="lk" style="left:1071.9px;top:404.50px;letter-spacing:0.037px">292ea2e</div>
<div class="lk" style="left:1138.9px;top:404.50px;letter-spacing:0.205px">f7f80b3</div>
<div class="td" style="left:277.0px;top:437.80px;letter-spacing:-0.031px">MSVC 2017</div>
<div class="sup" style="left:345.0px;top:433.70px;letter-spacing:0.104px">new</div>
<div class="td" style="left:387.3px;top:435.70px;letter-spacing:-0.334px">x64</div>
<div class="lk" style="left:446.0px;top:433.50px;letter-spacing:0.346px">release-1916-x64-gdal-3-3-1-mapserver-7-6-4</div>
<div class="lk" style="left:814.9px;top:433.50px;letter-spacing:0.370px">information</div>
<div class="td" style="left:931.2px;top:435.70px;letter-spacing:0.109px">2021-07-31 21:57:57</div>
<div class="lk" style="left:1071.9px;top:433.50px;letter-spacing:0.037px">292ea2e</div>
<div class="lk" style="left:1138.9px;top:433.50px;letter-spacing:0.205px">f7f80b3</div>
<div class="td" style="left:277.0px;top:466.80px;letter-spacing:-0.031px">MSVC 2019</div>
<div class="sup" style="left:345.0px;top:462.70px;letter-spacing:0.104px">new</div>
<div class="td" style="left:387.3px;top:464.70px;letter-spacing:-0.069px">win32</div>
<div class="lk" style="left:446.0px;top:462.50px;letter-spacing:0.324px">release-1928-gdal-3-3-1-mapserver-7-6-4</div>
<div class="lk" style="left:814.9px;top:462.50px;letter-spacing:0.370px">information</div>
<div class="td" style="left:931.2px;top:464.70px;letter-spacing:0.109px">2021-08-15 20:41:35</div>
<div class="lk" style="left:1071.9px;top:462.50px;letter-spacing:0.037px">292ea2e</div>
<div class="lk" style="left:1138.9px;top:462.50px;letter-spacing:0.205px">f7f80b3</div>
<div class="td" style="left:277.0px;top:495.80px;letter-spacing:-0.031px">MSVC 2019</div>
<div class="sup" style="left:345.0px;top:491.70px;letter-spacing:0.104px">new</div>
<div class="td" style="left:387.3px;top:493.70px;letter-spacing:-0.334px">x64</div>
<div class="lk" style="left:446.0px;top:491.50px;letter-spacing:0.346px">release-1928-x64-gdal-3-3-1-mapserver-7-6-4</div>
<div class="lk" style="left:814.9px;top:491.50px;letter-spacing:0.370px">information</div>
<div class="td" style="left:931.2px;top:493.70px;letter-spacing:0.109px">2021-08-17 21:19:04</div>
<div class="lk" style="left:1071.9px;top:491.50px;letter-spacing:0.037px">292ea2e</div>
<div class="lk" style="left:1138.9px;top:491.50px;letter-spacing:0.205px">f7f80b3</div>
<div class="th" style="left:276.0px;top:570.80px">Compiler</div>
<div class="th" style="left:363.0px;top:570.80px">Arch.</div>
<div class="th" style="left:422.0px;top:570.80px">Downloads</div>
<div class="th" style="left:791.0px;top:570.80px">Package Info</div>
<div class="th" style="left:908.0px;top:570.80px">Date</div>
<div class="th" style="left:1048.0px;top:570.80px">Revisions</div>
<div class="td" style="left:277.0px;top:600.70px;letter-spacing:-0.031px">MSVC 2015</div>
<div class="td" style="left:364.3px;top:600.70px;letter-spacing:-0.069px">win32</div>
<div class="lk" style="left:423.0px;top:598.50px;letter-spacing:0.355px;color:#660066">release-1900-gdal-2-4-4-mapserver-7-4-3</div>
<div class="lk" style="left:791.9px;top:598.50px;letter-spacing:0.370px">information</div>
<div class="td" style="left:909.2px;top:600.70px;letter-spacing:0.109px">2020-04-19 14:42:30</div>
<div class="lk" style="left:1048.9px;top:598.50px;letter-spacing:0.078px">f90be6a</div>
<div class="lk" style="left:1114.0px;top:598.50px;letter-spacing:-0.188px">9fe5e1e</div>
<div class="td" style="left:277.0px;top:629.70px;letter-spacing:-0.031px">MSVC 2015</div>
<div class="td" style="left:364.3px;top:629.70px;letter-spacing:-0.334px">x64</div>
<div class="lk" style="left:423.0px;top:627.50px;letter-spacing:0.374px">release-1900-x64-gdal-2-4-4-mapserver-7-4-3</div>
<div class="lk" style="left:791.9px;top:627.50px;letter-spacing:0.370px">information</div>
<div class="td" style="left:909.2px;top:629.70px;letter-spacing:0.109px">2020-04-19 14:42:50</div>
<div class="lk" style="left:1048.9px;top:627.50px;letter-spacing:0.078px">f90be6a</div>
<div class="lk" style="left:1114.0px;top:627.50px;letter-spacing:-0.188px">9fe5e1e</div>
<div class="td" style="left:277.0px;top:658.70px;letter-spacing:-0.031px">MSVC 2017</div>
<div class="td" style="left:364.3px;top:658.70px;letter-spacing:-0.069px">win32</div>
<div class="lk" style="left:423.0px;top:656.50px;letter-spacing:0.355px;color:#660066">release-1911-gdal-2-4-4-mapserver-7-4-3</div>
<div class="lk" style="left:791.9px;top:656.50px;letter-spacing:0.370px">information</div>
<div class="td" style="left:909.2px;top:658.70px;letter-spacing:0.109px">2020-10-04 23:03:53</div>
<div class="lk" style="left:1048.9px;top:656.50px;letter-spacing:0.078px">f90be6a</div>
<div class="lk" style="left:1114.0px;top:656.50px;letter-spacing:-0.188px">9fe5e1e</div>
<div class="td" style="left:277.0px;top:687.70px;letter-spacing:-0.031px">MSVC 2017</div>
<div class="td" style="left:364.3px;top:687.70px;letter-spacing:-0.334px">x64</div>
<div class="lk" style="left:423.0px;top:685.50px;letter-spacing:0.374px">release-1911-x64-gdal-2-4-4-mapserver-7-4-3</div>
<div class="lk" style="left:791.9px;top:685.50px;letter-spacing:0.370px">information</div>
<div class="td" style="left:909.2px;top:687.70px;letter-spacing:0.109px">2020-08-06 21:23:28</div>
<div class="lk" style="left:1048.9px;top:685.50px;letter-spacing:0.078px">f90be6a</div>
<div class="lk" style="left:1114.0px;top:685.50px;letter-spacing:-0.188px">9fe5e1e</div>
<div class="p" style="left:264.4px;top:728.70px;letter-spacing:0.026px"><span class="pf"><span style="color:#ff0018">Note:</span> The different compilers or architectures involve different CRT dependencies, therefore the binaries of the different packages are not interchangeabl</span>e.</div>
<div class="p" style="left:264.6px;top:763.60px;letter-spacing:-0.004px">The <span style="color:#ff0018">new</span> packages are based on a completely new SDK build with upgraded dependency versions.</div>
<div class="p" style="left:264.6px;top:799.40px">The contents of the packages are provided under the terms of </div>
<div class="lk" style="left:709.0px;top:799.40px;letter-spacing:-0.008px">this license</div>
<div class="p" style="left:792.5px;top:799.40px;letter-spacing:0.049px">. It is intended to give you permission to do whatever you want with the files:</div>
<div class="p" style="left:1347.0px;top:799.40px">d</div>
<div class="p" style="left:264.6px;top:819.90px">proprietary commercial software, no permission from </div>
<div class="lk" style="left:644.0px;top:819.90px;letter-spacing:0.093px">Tamas Szekeres</div>
<div class="p" style="left:761.0px;top:819.90px;letter-spacing:0.001px"> is required. Some external libraries which can be optionally used by GDAL and Map</div>
<div class="p" style="left:1352.5px;top:819.90px">S</div>
<div class="p" style="left:264.6px;top:839.90px;letter-spacing:-0.011px"><b>MUST obtain valid licenses</b> for each of these dependent libraries.</div>
<!--GEN-END-->
<div id="chrome">
  <svg class="abs" style="left:0;top:0" width="1356" height="103" viewBox="0 0 1356 103">
    <g fill="#b4c6f0"><circle cx="680" cy="3.5" r="0.7" opacity="0.6"/><circle cx="752.7" cy="16" r="0.7" opacity="0.6"/><circle cx="803" cy="13" r="1.2" opacity="0.95"/><circle cx="574.7" cy="32.5" r="0.7" opacity="0.5"/><circle cx="1051" cy="2.8" r="1.3" opacity="0.95"/><circle cx="1113.4" cy="13" r="0.7" opacity="0.6"/><circle cx="1081" cy="31.6" r="1.1" opacity="0.85"/><circle cx="1099.4" cy="32" r="0.9" opacity="0.7"/><circle cx="1193" cy="22" r="0.8" opacity="0.7"/><circle cx="1289.6" cy="14" r="0.8" opacity="0.7"/><circle cx="352" cy="3.5" r="0.7" opacity="0.5"/><circle cx="306" cy="21.5" r="0.6" opacity="0.4"/><circle cx="362.6" cy="23.5" r="0.6" opacity="0.5"/><circle cx="144.5" cy="71" r="0.8" opacity="0.5"/><circle cx="822" cy="101" r="0.7" opacity="0.6"/><circle cx="1197" cy="102.4" r="1.4" opacity="0.9"/><circle cx="866" cy="101.5" r="0.7" opacity="0.5"/></g>
    <!-- tab outline -->
    <path d="M0 33.5 C5 33.5 8.5 30 8.5 25 V8 C8.5 3.5 12 0.5 16 0.5 H240 C244.5 0.5 247.5 3.5 247.5 8 V25 C247.5 30 251 33.5 256 33.5 H1356" fill="none" stroke="#858890" stroke-width="1"/>
    <!-- favicon globe -->
    <!--FAV--><g transform="translate(20,9)" shape-rendering="crispEdges"><rect x="5" y="0" width="6" height="1" fill="#000"/><rect x="3" y="1" width="2" height="1" fill="#000"/><rect x="5" y="1" width="2" height="1" fill="#06f80a"/><rect x="7" y="1" width="2" height="1" fill="#0202fa"/><rect x="9" y="1" width="1" height="1" fill="#06f80a"/><rect x="10" y="1" width="1" height="1" fill="#0202fa"/><rect x="11" y="1" width="2" height="1" fill="#000"/><rect x="2" y="2" width="1" height="1" fill="#000"/><rect x="3" y="2" width="4" height="1" fill="#06f80a"/><rect x="7" y="2" width="1" height="1" fill="#0202fa"/><rect x="8" y="2" width="1" height="1" fill="#06f80a"/><rect x="9" y="2" width="3" height="1" fill="#0202fa"/><rect x="12" y="2" width="1" height="1" fill="#06f80a"/><rect x="13" y="2" width="1" height="1" fill="#000"/><rect x="1" y="3" width="1" height="1" fill="#000"/><rect x="2" y="3" width="8" height="1" fill="#06f80a"/><rect x="10" y="3" width="2" height="1" fill="#0202fa"/><rect x="12" y="3" width="2" height="1" fill="#06f80a"/><rect x="14" y="3" width="1" height="1" fill="#000"/><rect x="1" y="4" width="1" height="1" fill="#000"/><rect x="2" y="4" width="1" height="1" fill="#0202fa"/><rect x="3" y="4" width="7" height="1" fill="#06f80a"/><rect x="10" y="4" width="2" height="1" fill="#0202fa"/><rect x="12" y="4" width="2" height="1" fill="#06f80a"/><rect x="14" y="4" width="1" height="1" fill="#000"/><rect x="0" y="5" width="1" height="1" fill="#000"/><rect x="1" y="5" width="2" height="1" fill="#0202fa"/><rect x="3" y="5" width="6" height="1" fill="#06f80a"/><rect x="9" y="5" width="4" height="1" fill="#0202fa"/><rect x="13" y="5" width="2" height="1" fill="#06f80a"/><rect x="15" y="5" width="1" height="1" fill="#000"/><rect x="0" y="6" width="1" height="1" fill="#000"/><rect x="1" y="6" width="2" height="1" fill="#0202fa"/><rect x="3" y="6" width="7" height="1" fill="#06f80a"/><rect x="10" y="6" width="3" height="1" fill="#0202fa"/><rect x="13" y="6" width="2" height="1" fill="#06f80a"/><rect x="15" y="6" width="1" height="1" fill="#000"/><rect x="0" y="7" width="1" height="1" fill="#000"/><rect x="1" y="7" width="3" height="1" fill="#0202fa"/><rect x="4" y="7" width="2" height="1" fill="#06f80a"/><rect x="6" y="7" width="3" height="1" fill="#0202fa"/><rect x="9" y="7" width="1" height="1" fill="#06f80a"/><rect x="10" y="7" width="4" height="1" fill="#0202fa"/><rect x="14" y="7" width="1" height="1" fill="#06f80a"/><rect x="15" y="7" width="1" height="1" fill="#000"/><rect x="0" y="8" width="1" height="1" fill="#000"/><rect x="1" y="8" width="4" height="1" fill="#0202fa"/><rect x="5" y="8" width="4" height="1" fill="#06f80a"/><rect x="9" y="8" width="6" height="1" fill="#0202fa"/><rect x="15" y="8" width="1" height="1" fill="#000"/><rect x="0" y="9" width="1" height="1" fill="#000"/><rect x="1" y="9" width="5" height="1" fill="#0202fa"/><rect x="6" y="9" width="4" height="1" fill="#06f80a"/><rect x="10" y="9" width="5" height="1" fill="#0202fa"/><rect x="15" y="9" width="1" height="1" fill="#000"/><rect x="0" y="10" width="1" height="1" fill="#000"/><rect x="1" y="10" width="6" height="1" fill="#0202fa"/><rect x="7" y="10" width="5" height="1" fill="#06f80a"/><rect x="12" y="10" width="3" height="1" fill="#0202fa"/><rect x="15" y="10" width="1" height="1" fill="#000"/><rect x="1" y="11" width="1" height="1" fill="#000"/><rect x="2" y="11" width="5" height="1" fill="#0202fa"/><rect x="7" y="11" width="5" height="1" fill="#06f80a"/><rect x="12" y="11" width="2" height="1" fill="#0202fa"/><rect x="14" y="11" width="1" height="1" fill="#000"/><rect x="1" y="12" width="1" height="1" fill="#000"/><rect x="2" y="12" width="6" height="1" fill="#0202fa"/><rect x="8" y="12" width="3" height="1" fill="#06f80a"/><rect x="11" y="12" width="3" height="1" fill="#0202fa"/><rect x="14" y="12" width="1" height="1" fill="#000"/><rect x="2" y="13" width="1" height="1" fill="#000"/><rect x="3" y="13" width="6" height="1" fill="#0202fa"/><rect x="9" y="13" width="2" height="1" fill="#06f80a"/><rect x="11" y="13" width="2" height="1" fill="#0202fa"/><rect x="13" y="13" width="1" height="1" fill="#000"/><rect x="3" y="14" width="2" height="1" fill="#000"/><rect x="5" y="14" width="4" height="1" fill="#0202fa"/><rect x="9" y="14" width="1" height="1" fill="#06f80a"/><rect x="10" y="14" width="1" height="1" fill="#0202fa"/><rect x="11" y="14" width="2" height="1" fill="#000"/><rect x="5" y="15" width="6" height="1" fill="#000"/></g><!--/FAV-->
    <!-- close x -->
    <path d="M227 12.5 L235.5 21 M235.5 12.5 L227 21" stroke="#e6e8ee" stroke-width="1.6" fill="none"/>
    <!-- new tab plus -->
    <path d="M263.800 17 H275.800 M269.800 11 V23" stroke="#737b8a" stroke-width="1.6" fill="none"/>
    <!-- back -->
    <path d="M29 52 H16.5 M22.5 45.8 L16.3 52 L22.5 58.2" stroke="#fff" stroke-width="2" fill="none"/>
    <!-- forward -->
    <path d="M47 52 H59.5 M53.5 45.8 L59.7 52 L53.5 58.2" stroke="#7a8396" stroke-width="2" fill="none"/>
    <!-- reload -->
    <path d="M91.2 47.8 A6.2 6.2 0 1 0 92.2 53.5" stroke="#fff" stroke-width="2" fill="none"/>
    <path d="M93 45 V51 H87 Z" fill="#fff"/>
  </svg>
  <div id="omni"></div>
  <svg class="abs" style="left:121px;top:45px" width="10" height="13" viewBox="0 0 10 13"><rect x="0.8" y="5.2" width="8.4" height="7" rx="1" fill="#9aa0a6"/><path d="M2.8 5.5 V3.6 A2.2 2.2 0 0 1 7.2 3.6 V5.5" fill="none" stroke="#9aa0a6" stroke-width="1.4"/></svg>
  <div id="tabtitle">GISInternals Support Site</div>
  <div id="url">gisinternals.com<span>/release.php</span></div>
  <!-- bookmarks -->
  <svg class="bmi" style="left:14px;top:77px" width="15" height="15" viewBox="0 0 15 15">
    <rect x="0.5" y="0" width="3" height="3.4" fill="#ea4335"/><rect x="5.5" y="0" width="3" height="3.4" fill="#ea4335"/><rect x="10.5" y="0" width="3" height="3.4" fill="#ea4335"/>
    <rect x="0.5" y="5.2" width="3" height="3.4" fill="#34a853"/><rect x="5.5" y="5.2" width="3" height="3.4" fill="#2d8cf0"/><rect x="10.5" y="5.2" width="3" height="3.4" fill="#fbbc05"/>
    <rect x="0.5" y="10.4" width="3" height="3.4" fill="#34a853"/><rect x="5.5" y="10.4" width="3" height="3.4" fill="#fbbc05"/><rect x="10.5" y="10.4" width="3" height="3.4" fill="#fbbc05"/>
  </svg>
  <div class="bm" style="left:38px">应用</div>
  <svg class="bmi" style="left:78px" viewBox="0 0 16 16"><rect width="16" height="16" rx="2.2" fill="#fff"/><ellipse cx="3.6" cy="6.6" rx="1.4" ry="1.8" fill="#2932e1"/><ellipse cx="6.2" cy="3.6" rx="1.4" ry="1.8" fill="#2932e1"/><ellipse cx="9.8" cy="3.6" rx="1.4" ry="1.8" fill="#2932e1"/><ellipse cx="12.4" cy="6.6" rx="1.4" ry="1.8" fill="#2932e1"/><path d="M8 6.8 C10 6.8 12.6 10 12.6 12 C12.6 14 10.5 14 8 13.6 C5.5 14 3.4 14 3.4 12 C3.4 10 6 6.8 8 6.8 Z" fill="#2932e1"/><rect x="5.6" y="10" width="4.8" height="2.6" rx="0.8" fill="#fff" opacity="0.85"/></svg>
  <div class="bm" style="left:102px">百度一下，你就知道</div>
  <div class="bmi" style="left:226px;background:#1a8cff;border-radius:2px;color:#fff;font-size:11px;line-height:16px;text-align:center">译</div>
  <div class="bm" style="left:250px">百度翻译</div>
  <svg class="bmi" style="left:314px" viewBox="0 0 16 16"><circle cx="8" cy="8" r="7.2" fill="#f1f3f4"/><path d="M3 5.5 C5 4 6 6.5 8 6 C9.5 5.6 9 3 10.5 2.5 C8 1.6 4.5 2.5 3 5.5 Z M5 9 C6.5 8.6 7.5 10 9 10.5 C10 10.8 10 12.5 9 13.5 C7 14 5.5 12.5 5 9 Z M11 7 C12.5 6.5 13.5 7.5 14 9 C13.6 10.5 12.8 11.4 12 12 C11.5 10.5 10.5 8.5 11 7 Z" fill="#1f2a45"/></svg>
  <div class="bm" style="left:338px">ArcGIS API for Jav...</div>
  <svg class="bmi" style="left:467px" viewBox="0 0 16 16"><path d="M7.9 0.8 C5 0.8 5.2 2 5.2 2 V3.8 H8 V4.4 H3.2 C3.2 4.400 1 4.200 1 7.900 C1 11.600 3 11.400 3 11.400 H4.400 V9.500 C4.400 9.500 4.300 7.500 6.400 7.500 H9.300 C9.300 7.500 11.200 7.500 11.200 5.700 V2.700 C11.200 2.700 11.500 0.800 7.900 0.800 Z" fill="#3c78aa"/><path d="M8.100 15.200 C11 15.200 10.800 14 10.800 14 V12.200 H8 V11.600 H12.800 C12.800 11.600 15 11.800 15 8.100 C15 4.400 13 4.600 13 4.600 H11.600 V6.500 C11.600 6.500 11.700 8.500 9.600 8.500 H6.700 C6.700 8.500 4.800 8.500 4.800 10.300 V13.300 C4.800 13.300 4.500 15.200 8.100 15.200 Z" fill="#fdd835"/></svg>
  <div class="bm" style="left:491px">Python 标准库 —...</div>
  <div class="bmi" style="left:613px;background:#f4502a;border-radius:1px;color:#fff;font-size:15px;line-height:16px;text-align:center">C</div>
  <div class="bm" style="left:637px">(17条消息) CSDN -...</div>
  <div class="bmi" style="left:768px;background:#1772f6;border-radius:3px;color:#fff;font-size:11px;line-height:16px;text-align:center;font-weight:bold">知</div>
  <div class="bm" style="left:792px">i3s 一种开源的三维...</div>
  <svg class="bmi" style="left:922px" viewBox="0 0 16 16"><circle cx="8" cy="8" r="7.5" fill="#2f6fb0"/><path d="M3 4 L7 2 L9 4.500 L6.500 6.500 L8 9 L5 11 L3 8.500 Z M10 7 L13.500 7.500 L13 11 L10.500 13 L9.500 10 Z" fill="#79b851"/><path d="M0.500 8 H15.500 M8 0.500 V15.500 M2.500 3.500 C6 6 10 6 13.500 3.500 M2.500 12.500 C6 10 10 10 13.500 12.500 M8 0.500 C4 4 4 12 8 15.500 M8 0.500 C12 4 12 12 8 15.500" stroke="#dfe8d8" stroke-width="0.6" fill="none" opacity="0.8"/></svg>
  <div class="bm" style="left:946px">arcgis的slpk数据...</div>
  <svg class="bmi" style="left:1066px" viewBox="0 0 16 16"><path d="M1 1 H11.800 V9.600 H13.200 V15 H1 Z" fill="#ffe083"/><path d="M10.200 15 V10.600 Q10.200 9.800 11 9.800 H13.200 V15 Z" fill="#ffe9a6"/><path d="M1 14.300 H13.200 V15 H1 Z" fill="#f7cd55"/></svg>
  <div class="bm" style="left:1089px">OS</div>
  <svg class="bmi" style="left:1123px" viewBox="0 0 16 16"><path d="M1 1 H11.800 V9.600 H13.200 V15 H1 Z" fill="#ffe083"/><path d="M10.200 15 V10.600 Q10.200 9.800 11 9.800 H13.200 V15 Z" fill="#ffe9a6"/><path d="M1 14.300 H13.200 V15 H1 Z" fill="#f7cd55"/></svg>
  <div class="bm" style="left:1146px">GIS</div>
  <svg class="bmi" style="left:1183px" viewBox="0 0 16 16"><path d="M1 1 H11.800 V9.600 H13.200 V15 H1 Z" fill="#ffe083"/><path d="M10.200 15 V10.600 Q10.200 9.800 11 9.800 H13.200 V15 Z" fill="#ffe9a6"/><path d="M1 14.300 H13.200 V15 H1 Z" fill="#f7cd55"/></svg>
  <div class="bm" style="left:1206px">Python</div>
  <svg class="bmi" style="left:1264px" viewBox="0 0 16 16"><path d="M1 1 H11.800 V9.600 H13.200 V15 H1 Z" fill="#ffe083"/><path d="M10.200 15 V10.600 Q10.200 9.800 11 9.800 H13.200 V15 Z" fill="#ffe9a6"/><path d="M1 14.300 H13.200 V15 H1 Z" fill="#f7cd55"/></svg>
  <div class="bm" style="left:1287px">DataBase</div>
</div>
</body>
</html>
